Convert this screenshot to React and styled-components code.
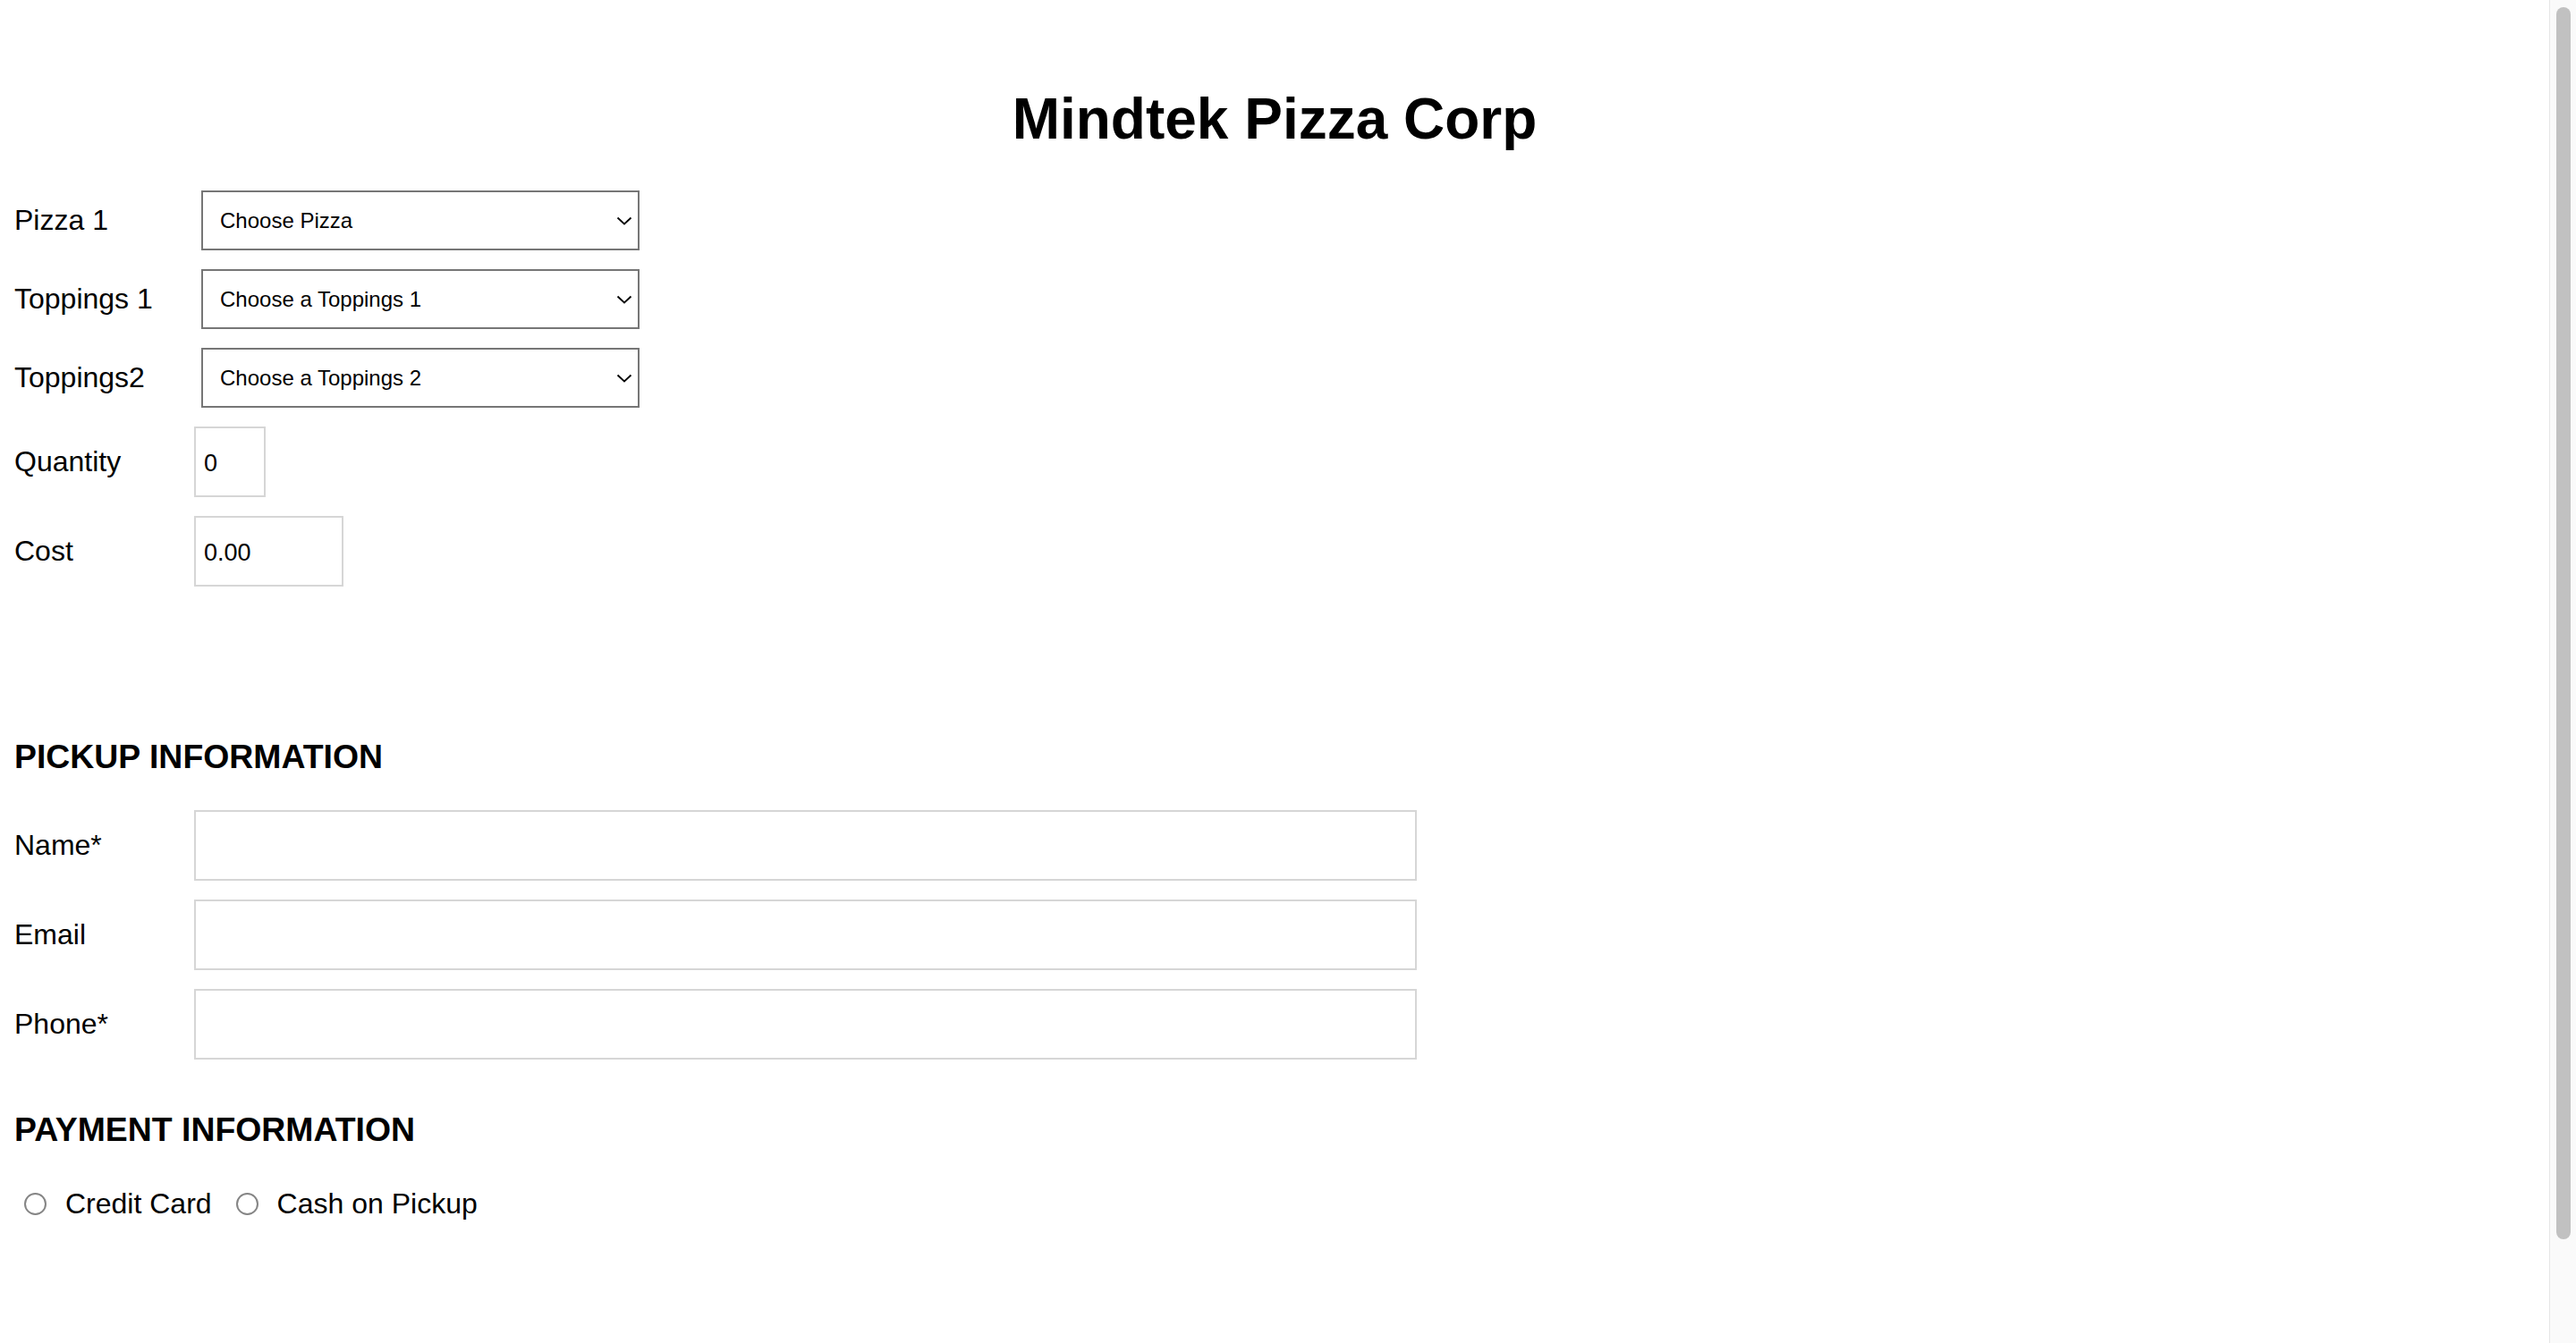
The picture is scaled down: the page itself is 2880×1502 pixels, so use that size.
import React from 'react';
import styled, { createGlobalStyle } from 'styled-components';

const GlobalStyle = createGlobalStyle`
  html, body {
    margin: 0;
    padding: 0;
    background: #fff;
    color: #000;
    font-family: "Liberation Sans", Arial, Helvetica, sans-serif;
  }
  * { box-sizing: border-box; }
  ::-webkit-scrollbar { display: none; }
`;

// the window's scroll bar, drawn over the right edge of the page
const ScrollTrack = styled.div`
  position: fixed;
  top: 0;
  right: 0;
  bottom: 0;
  width: 30px;
  background: #fafafa;
  border-left: 1px solid #e6e6e6;
`;

const ScrollThumb = styled.div`
  position: absolute;
  top: 8px;
  left: 7px;
  width: 16px;
  height: 1378px;
  border-radius: 8px;
  background: #c1c1c1;
`;

const Page = styled.div`
  min-height: 1640px;
  margin-right: 30px;
  padding: 96px 16px 0 16px;
`;

const Title = styled.h1`
  margin: 0 0 43px 0;
  font-size: 64px;
  font-weight: bold;
  text-align: center;
`;

const FormBlock = styled.div`
  display: flex;
  flex-direction: column;
  gap: 21px;
`;

const Row = styled.div`
  display: flex;
  align-items: center;
`;

const Label = styled.label`
  width: 201px;
  flex: none;
  font-size: 32px;
  line-height: 1.15;
`;

const SelectWrap = styled.div`
  position: relative;
  margin-left: 8px;
  width: 490px;
  height: 67px;
`;

const Select = styled.select`
  appearance: none;
  width: 100%;
  height: 100%;
  border: 2px solid #767676;
  border-radius: 0;
  background: #fff;
  color: #000;
  padding: 0 40px 0 19px;
  font-family: "Liberation Sans", Arial, sans-serif;
  font-size: 24px;
  outline: none;
`;

const Chevron = styled.svg`
  position: absolute;
  right: 8px;
  top: 50%;
  width: 18px;
  height: 10px;
  margin-top: -5px;
  pointer-events: none;
`;

const TextInput = styled.input`
  width: ${(p) => p.$width}px;
  height: 79px;
  border: 2px solid #d6d6d6;
  border-radius: 0;
  padding: 3px 9px 0 9px;
  font-family: "Liberation Sans", Arial, sans-serif;
  font-size: 27px;
  color: #000;
  background: #fff;
  outline: none;
`;

const SectionTitle = styled.h3`
  margin: ${(p) => p.$top}px 0 38px 0;
  font-size: 37.4px;
  font-weight: bold;
  line-height: 43px;
`;

const RadioRow = styled.div`
  display: flex;
  align-items: center;
  gap: 16px;
  padding-top: 5px;
`;

const RadioOption = styled.label`
  display: flex;
  align-items: center;
  font-size: 32px;
  line-height: 37px;
`;

const Radio = styled.input`
  appearance: none;
  width: 25px;
  height: 25px;
  margin: 0 21px 0 11px;
  border: 2px solid #858585;
  border-radius: 50%;
  background: #fff;
`;

const ChevronIcon = () => (
  <Chevron viewBox="0 0 18 10">
    <path d="M1.5 1.5 L9 8.5 L16.5 1.5" fill="none" stroke="#000" strokeWidth="1.8" />
  </Chevron>
);

const SelectField = ({ label, placeholder }) => (
  <Row>
    <Label>{label}</Label>
    <SelectWrap>
      <Select defaultValue="">
        <option value="">{placeholder}</option>
      </Select>
      <ChevronIcon />
    </SelectWrap>
  </Row>
);

const InputField = ({ label, width, value }) => (
  <Row>
    <Label>{label}</Label>
    <TextInput $width={width} defaultValue={value} />
  </Row>
);

export default function App() {
  return (
    <>
      <GlobalStyle />
      <Page>
        <Title>Mindtek Pizza Corp</Title>

        <FormBlock>
          <SelectField label="Pizza 1" placeholder="Choose Pizza" />
          <SelectField label="Toppings 1" placeholder="Choose a Toppings 1" />
          <SelectField label="Toppings2" placeholder="Choose a Toppings 2" />
          <InputField label="Quantity" width={80} value="0" />
          <InputField label="Cost" width={167} value="0.00" />
        </FormBlock>

        <SectionTitle $top={169}>PICKUP INFORMATION</SectionTitle>
        <FormBlock>
          <InputField label="Name*" width={1367} value="" />
          <InputField label="Email" width={1367} value="" />
          <InputField label="Phone*" width={1367} value="" />
        </FormBlock>

        <SectionTitle $top={57}>PAYMENT INFORMATION</SectionTitle>
        <RadioRow>
          <RadioOption>
            <Radio type="radio" name="payment" />
            Credit Card
          </RadioOption>
          <RadioOption>
            <Radio type="radio" name="payment" />
            Cash on Pickup
          </RadioOption>
        </RadioRow>
      </Page>
      <ScrollTrack>
        <ScrollThumb />
      </ScrollTrack>
    </>
  );
}
